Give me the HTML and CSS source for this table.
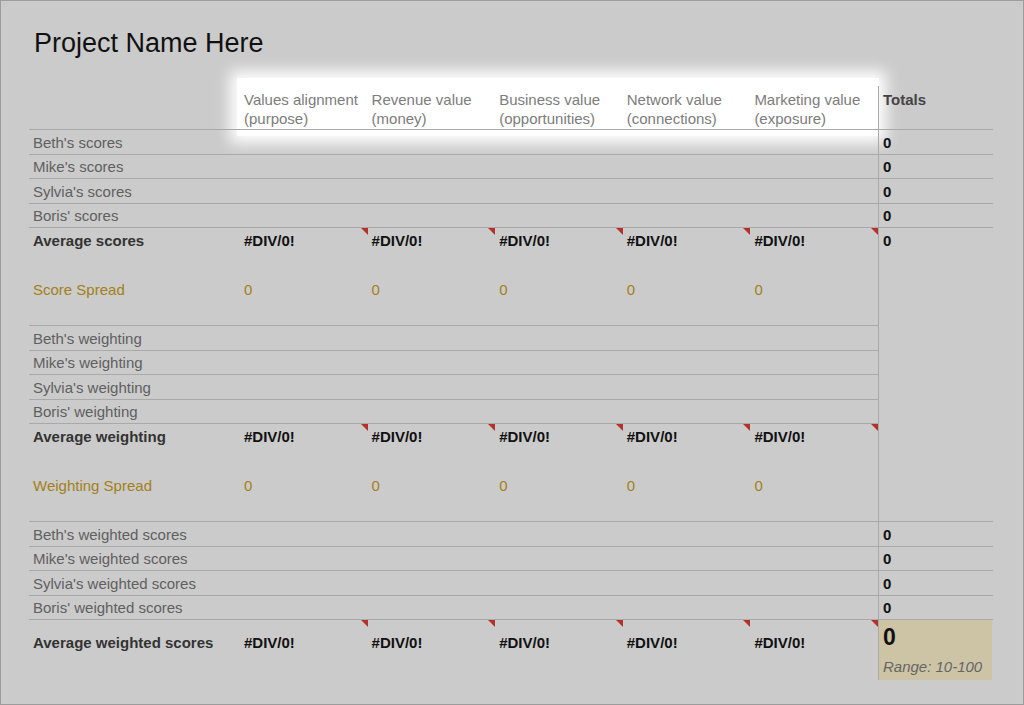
FILE: index.html
```html
<!DOCTYPE html>
<html lang="en">
<head>
<meta charset="utf-8">
<title>Project Name Here</title>
<link rel="stylesheet" href="styles.css">
</head>
<body>
<div class="frame">
  <h1 class="title">Project Name Here</h1>
  <div class="sheet">
    <!-- header -->
    <div class="cell b"></div>
    <div class="cell head b"><div>Values alignment<br>(purpose)</div></div>
    <div class="cell head b"><div>Revenue value<br>(money)</div></div>
    <div class="cell head b"><div>Business value<br>(opportunities)</div></div>
    <div class="cell head b"><div>Network value<br>(connections)</div></div>
    <div class="cell head b"><div>Marketing value<br>(exposure)</div></div>
    <div class="cell head tot b totals-head">Totals</div>

    <!-- scores -->
    <div class="cell lbl b">Beth's scores</div><div class="cell b"></div><div class="cell b"></div><div class="cell b"></div><div class="cell b"></div><div class="cell b"></div><div class="cell tot val b">0</div>
    <div class="cell lbl b">Mike's scores</div><div class="cell b"></div><div class="cell b"></div><div class="cell b"></div><div class="cell b"></div><div class="cell b"></div><div class="cell tot val b">0</div>
    <div class="cell lbl b">Sylvia's scores</div><div class="cell b"></div><div class="cell b"></div><div class="cell b"></div><div class="cell b"></div><div class="cell b"></div><div class="cell tot val b">0</div>
    <div class="cell lbl b">Boris' scores</div><div class="cell b"></div><div class="cell b"></div><div class="cell b"></div><div class="cell b"></div><div class="cell b"></div><div class="cell tot val b">0</div>

    <div class="cell lbl strong">Average scores</div>
    <div class="cell val tri">#DIV/0!</div><div class="cell val tri">#DIV/0!</div><div class="cell val tri">#DIV/0!</div><div class="cell val tri">#DIV/0!</div><div class="cell val tri">#DIV/0!</div>
    <div class="cell tot val">0</div>

    <div class="cell gold b">Score Spread</div>
    <div class="cell gold b">0</div><div class="cell gold b">0</div><div class="cell gold b">0</div><div class="cell gold b">0</div><div class="cell gold b">0</div>
    <div class="cell tot b span7"></div>

    <!-- weighting -->
    <div class="cell lbl b">Beth's weighting</div><div class="cell b"></div><div class="cell b"></div><div class="cell b"></div><div class="cell b"></div><div class="cell b"></div>
    <div class="cell lbl b">Mike's weighting</div><div class="cell b"></div><div class="cell b"></div><div class="cell b"></div><div class="cell b"></div><div class="cell b"></div>
    <div class="cell lbl b">Sylvia's weighting</div><div class="cell b"></div><div class="cell b"></div><div class="cell b"></div><div class="cell b"></div><div class="cell b"></div>
    <div class="cell lbl b">Boris' weighting</div><div class="cell b"></div><div class="cell b"></div><div class="cell b"></div><div class="cell b"></div><div class="cell b"></div>

    <div class="cell lbl strong">Average weighting</div>
    <div class="cell val tri">#DIV/0!</div><div class="cell val tri">#DIV/0!</div><div class="cell val tri">#DIV/0!</div><div class="cell val tri">#DIV/0!</div><div class="cell val tri">#DIV/0!</div>

    <div class="cell gold b">Weighting Spread</div>
    <div class="cell gold b">0</div><div class="cell gold b">0</div><div class="cell gold b">0</div><div class="cell gold b">0</div><div class="cell gold b">0</div>

    <!-- weighted scores -->
    <div class="cell lbl b">Beth's weighted scores</div><div class="cell b"></div><div class="cell b"></div><div class="cell b"></div><div class="cell b"></div><div class="cell b"></div><div class="cell tot val b">0</div>
    <div class="cell lbl b">Mike's weighted scores</div><div class="cell b"></div><div class="cell b"></div><div class="cell b"></div><div class="cell b"></div><div class="cell b"></div><div class="cell tot val b">0</div>
    <div class="cell lbl b">Sylvia's weighted scores</div><div class="cell b"></div><div class="cell b"></div><div class="cell b"></div><div class="cell b"></div><div class="cell b"></div><div class="cell tot val b">0</div>
    <div class="cell lbl b">Boris' weighted scores</div><div class="cell b"></div><div class="cell b"></div><div class="cell b"></div><div class="cell b"></div><div class="cell b"></div><div class="cell tot val b">0</div>

    <div class="cell lbl strong last">Average weighted scores</div>
    <div class="cell val tri last">#DIV/0!</div><div class="cell val tri last">#DIV/0!</div><div class="cell val tri last">#DIV/0!</div><div class="cell val tri last">#DIV/0!</div><div class="cell val tri last">#DIV/0!</div>
    <div class="cell tot grand">
      <div class="grand-num">0</div>
      <div class="grand-range">Range: 10-100</div>
    </div>
  </div>
</div>
</body>
</html>
```

FILE: styles.css
```css
html, body {
  margin: 0;
  padding: 0;
  background: #ffffff;
}

body {
  font-family: "Liberation Sans", Arial, Helvetica, sans-serif;
  font-size: 15px;
  line-height: 19px;
}

.frame {
  width: 1022px;
  height: 703px;
  border: 1px solid #9c9c9c;
  background: #cbcbcb;
  overflow: hidden;
}

.title {
  margin: 0;
  padding: 27px 0 0 33px;
  font-size: 27px;
  line-height: 31px;
  font-weight: 400;
  color: #111111;
}

.sheet {
  position: relative;
  isolation: isolate;
  margin: 27px 0 0 28px;
  display: grid;
  grid-template-columns: 211px repeat(5, 127.6px) 115px;
  grid-template-rows: 44px repeat(5, 24.5px) 73.5px repeat(5, 24.5px) 73.5px repeat(4, 24.5px) 60px;
  width: 964px;
}

/* soft white highlight behind the criteria headers */
.sheet::before {
  content: "";
  position: absolute;
  z-index: -1;
  left: 208px;
  top: -8px;
  width: 642px;
  height: 58px;
  background: #ffffff;
  box-shadow: 0 0 14px 7px #ffffff;
}

.cell {
  box-sizing: border-box;
  display: flex;
  align-items: center;
  padding: 1px 4px 0;
  white-space: nowrap;
  position: relative;
}

.b {
  border-bottom: 1px solid #a9a9a9;
}

.tot {
  border-left: 1px solid #a9a9a9;
}

.head {
  align-items: flex-start;
  padding-top: 4px;
  color: #7c7c7c;
}

.totals-head {
  font-weight: 700;
  color: #444444;
}

.lbl {
  color: #606060;
}

.strong {
  font-weight: 700;
  color: #333333;
}

.val {
  font-weight: 700;
  color: #111111;
}

.gold {
  color: #a38019;
}

.span7 {
  grid-row: span 7;
}

.tri::after {
  content: "";
  position: absolute;
  top: 0;
  right: 0;
  width: 0;
  height: 0;
  border-top: 7px solid #b5322a;
  border-left: 7px solid transparent;
}

.last {
  align-items: flex-start;
  padding-top: 13px;
}

.grand {
  flex-direction: column;
  align-items: flex-start;
  padding-top: 3px;
  margin-right: 1px;
  background: #cdc4a5;
}

.grand-num {
  font-size: 23px;
  line-height: 28px;
  font-weight: 700;
  color: #111111;
}

.grand-range {
  margin-top: 6px;
  font-style: italic;
  color: #666666;
}
```
